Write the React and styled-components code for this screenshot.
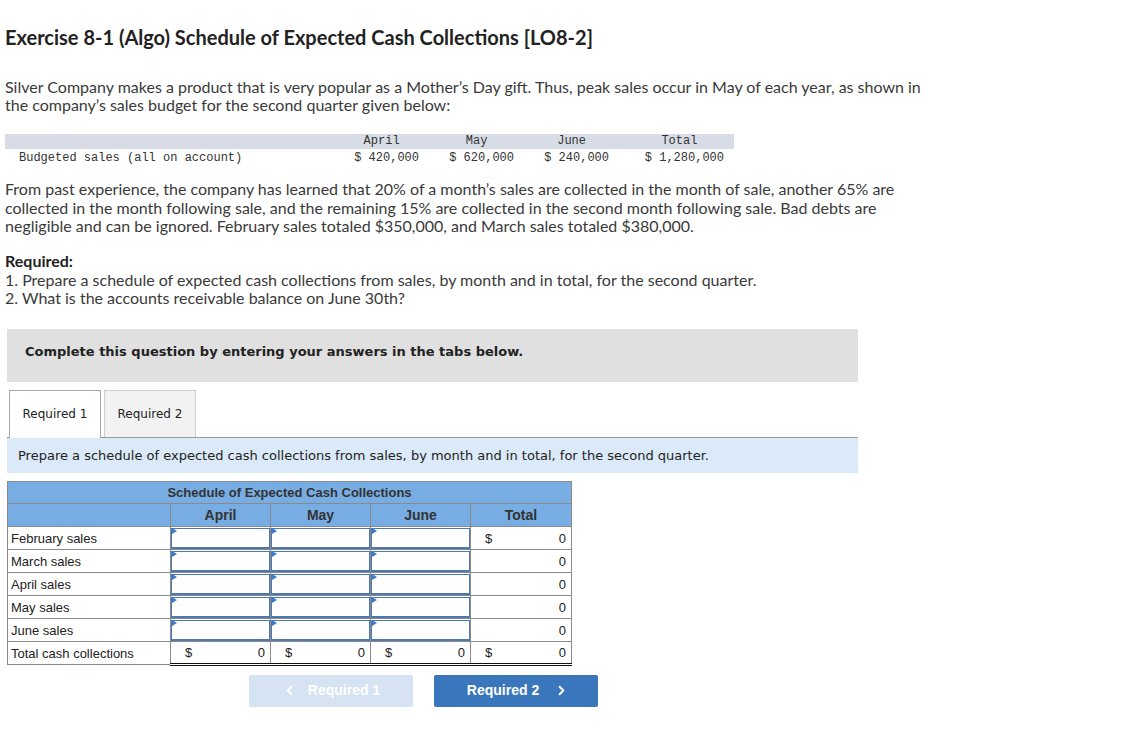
import React from 'react';
import styled, { createGlobalStyle } from 'styled-components';
import { ChevronLeft, ChevronRight } from 'lucide-react';

const GlobalStyle = createGlobalStyle`
  html, body {
    margin: 0;
    padding: 0;
    background: #fff;
  }
  body {
    font-family: Lato, "Open Sans", sans-serif;
    color: #333;
  }
`;

const Page = styled.div`
  width: 853px;
  padding: 26px 0 40px 5px;
`;

const Title = styled.h1`
  margin: 0;
  font-size: 20px;
  line-height: 22px;
  font-weight: 700;
  color: #222;
`;

const Para = styled.p`
  margin: ${(p) => p.$top || 0}px 0 0;
  font-size: 16px;
  line-height: ${(p) => p.$lh || 18}px;
  color: #3a3a3a;
  width: 940px;
`;

const Strong = styled.strong`
  font-weight: 700;
  color: #222;
`;

const Budget = styled.div`
  margin-top: 20px;
  width: 729px;
  display: grid;
  grid-template-columns: 319px 95px 95px 95px 115px 10px;
  font-family: "Liberation Mono", monospace;
  font-size: 12px;
  color: #333;
`;

const BudgetHead = styled.div`
  background: #d8dce6;
  height: 15px;
  line-height: 15px;
  text-align: right;
`;

const HeadLabel = styled.span`
  display: inline-block;
  width: ${(p) => p.$w}ch;
  text-align: center;
  transform: translateX(-5px);
`;

const BudgetCell = styled.div`
  height: 15px;
  line-height: 15px;
  padding-top: 2px;
  padding-left: ${(p) => (p.$label ? 14 : 0)}px;
  text-align: ${(p) => (p.$label ? 'left' : 'right')};
  white-space: nowrap;
`;

const Question = styled.div`
  margin: 21px 0 0 2px;
  width: 851px;
`;

const Notice = styled.div`
  height: 53px;
  background: #e0e0e0;
  display: flex;
  align-items: center;
  padding: 0 0 7px 18px;
  box-sizing: border-box;
  font-family: "DejaVu Sans", Verdana, sans-serif;
  font-weight: 700;
  font-size: 13px;
  color: #222;
`;

const Tabs = styled.div`
  margin-top: 8px;
  display: flex;
  align-items: flex-end;
  gap: 3px;
  padding-left: 2px;
  border-bottom: 1px solid #9a9a9a;
`;

const Tab = styled.div`
  width: 92px;
  box-sizing: border-box;
  display: flex;
  align-items: center;
  justify-content: center;
  font-family: "DejaVu Sans", Verdana, sans-serif;
  font-size: 12px;
  color: #222;
  background: ${(p) => (p.$active ? '#fff' : '#f2f2f2')};
  border: 1px solid ${(p) => (p.$active ? '#a8a8a8' : '#cfcfcf')};
  border-bottom: none;
  margin-bottom: ${(p) => (p.$active ? '-1px' : '0')};
  height: ${(p) => (p.$active ? '48px' : '47px')};
  padding-bottom: ${(p) => (p.$active ? '1px' : '0')};
`;

const Instruction = styled.div`
  height: 35px;
  background: #dbeaf8;
  display: flex;
  align-items: center;
  padding-left: 11px;
  font-family: "DejaVu Sans", Verdana, sans-serif;
  font-size: 13px;
  color: #222;
`;

const Schedule = styled.table`
  margin-top: 8px;
  border-collapse: collapse;
  table-layout: fixed;
  width: 564px;
  font-family: "Liberation Sans", Arial, sans-serif;
  font-size: 13px;
  color: #222;
`;

const Row = styled.tr`
  height: ${(p) => p.$h || 23}px;
`;

const Th = styled.th`
  background: #78ade3;
  border: 1px solid #8a8a8a;
  padding: 0;
  font-weight: 700;
  font-size: ${(p) => p.$size || 14}px;
  color: #333;
  text-align: center;
  vertical-align: middle;
`;

const Label = styled.td`
  border: 1px solid #8a8a8a;
  padding: 1px 0 0 3px;
  font-size: 13px;
  white-space: nowrap;
  vertical-align: middle;
`;

const InputCell = styled.td`
  border: 1px solid #8a8a8a;
  padding: 0;
  position: relative;
`;

const InputBox = styled.div`
  position: absolute;
  inset: 1px 0 0 0;
  border: 1px solid #4d79b0;
  border-bottom-width: 2px;
  background: #fff;
`;

const Flag = styled.span`
  position: absolute;
  left: 1px;
  top: 1px;
  width: 0;
  height: 0;
  border-top: 3px solid transparent;
  border-bottom: 3px solid transparent;
  border-left: 5px solid #3b7bd0;
`;

const ValueCell = styled.td`
  border: 1px solid #8a8a8a;
  border-bottom: ${(p) => (p.$total ? '3px double #111' : '1px solid #8a8a8a')};
  padding: 1px 5px 0 14px;
  vertical-align: middle;
`;

const Money = styled.div`
  display: flex;
  justify-content: ${(p) => (p.$cur ? 'space-between' : 'flex-end')};
`;

const Nav = styled.div`
  margin: 9px 0 0 242px;
  display: flex;
  gap: 21px;
`;

const NavButton = styled.button`
  width: 164px;
  height: 32px;
  border: none;
  border-radius: 2px;
  display: flex;
  align-items: center;
  justify-content: center;
  gap: ${(p) => (p.$prev ? 11 : 15)}px;
  font-family: "Liberation Sans", Arial, sans-serif;
  font-weight: 700;
  font-size: 14px;
  color: #fff;
  background: ${(p) => (p.$disabled ? '#d5e3f2' : '#3a76bc')};
  cursor: ${(p) => (p.$disabled ? 'default' : 'pointer')};
  padding: 0 0 1px ${(p) => (p.$prev ? 0 : 4)}px;
`;

const months = [
  { m: 'April', v: '$ 420,000' },
  { m: 'May', v: '$ 620,000' },
  { m: 'June', v: '$ 240,000' },
  { m: 'Total', v: '$ 1,280,000' },
];

const rows = ['February sales', 'March sales', 'April sales', 'May sales', 'June sales'];

const Input = () => (
  <InputCell>
    <InputBox />
    <Flag />
  </InputCell>
);

const App = () => (
  <Page>
    <GlobalStyle />
    <Title>Exercise 8-1 (Algo) Schedule of Expected Cash Collections [LO8-2]</Title>
    <Para $top={30}>
      Silver Company makes a product that is very popular as a Mother’s Day gift. Thus, peak sales occur in May of each year, as shown in
      the company’s sales budget for the second quarter given below:
    </Para>

    <Budget>
      <BudgetHead />
      {months.map((c) => (
        <BudgetHead key={c.m}>
          <HeadLabel $w={c.v.length}>{c.m}</HeadLabel>
        </BudgetHead>
      ))}
      <BudgetHead />
      <BudgetCell $label>Budgeted sales (all on account)</BudgetCell>
      {months.map((c) => (
        <BudgetCell key={c.m}>{c.v}</BudgetCell>
      ))}
      <BudgetCell />
    </Budget>

    <Para $top={14} $lh={18.5}>
      From past experience, the company has learned that 20% of a month’s sales are collected in the month of sale, another 65% are
      <br />
      collected in the month following sale, and the remaining 15% are collected in the second month following sale. Bad debts are
      <br />
      negligible and can be ignored. February sales totaled $350,000, and March sales totaled $380,000.
    </Para>

    <Para $top={16.5} $lh={18.5}>
      <Strong>Required:</Strong>
      <br />
      1. Prepare a schedule of expected cash collections from sales, by month and in total, for the second quarter.
      <br />
      2. What is the accounts receivable balance on June 30th?
    </Para>

    <Question>
      <Notice>Complete this question by entering your answers in the tabs below.</Notice>
      <Tabs>
        <Tab $active>Required 1</Tab>
        <Tab>Required 2</Tab>
      </Tabs>
      <Instruction>
        Prepare a schedule of expected cash collections from sales, by month and in total, for the second quarter.
      </Instruction>

      <Schedule>
        <colgroup>
          <col style={{ width: 163 }} />
          <col style={{ width: 100 }} />
          <col style={{ width: 100 }} />
          <col style={{ width: 100 }} />
          <col style={{ width: 101 }} />
        </colgroup>
        <thead>
          <Row $h={22}>
            <Th colSpan={5} $size={13}>Schedule of Expected Cash Collections</Th>
          </Row>
          <Row>
            <Th />
            <Th>April</Th>
            <Th>May</Th>
            <Th>June</Th>
            <Th>Total</Th>
          </Row>
        </thead>
        <tbody>
          {rows.map((r, i) => (
            <Row key={r}>
              <Label>{r}</Label>
              <Input />
              <Input />
              <Input />
              <ValueCell>
                <Money $cur={i === 0}>
                  {i === 0 && <span>$</span>}
                  <span>0</span>
                </Money>
              </ValueCell>
            </Row>
          ))}
          <Row>
            <Label>Total cash collections</Label>
            {[0, 1, 2, 3].map((k) => (
              <ValueCell key={k} $total>
                <Money $cur>
                  <span>$</span>
                  <span>0</span>
                </Money>
              </ValueCell>
            ))}
          </Row>
        </tbody>
      </Schedule>

      <Nav>
        <NavButton $prev $disabled>
          <ChevronLeft size={15} strokeWidth={3} />
          Required 1
        </NavButton>
        <NavButton>
          Required 2
          <ChevronRight size={15} strokeWidth={3} />
        </NavButton>
      </Nav>
    </Question>
  </Page>
);

export default App;
